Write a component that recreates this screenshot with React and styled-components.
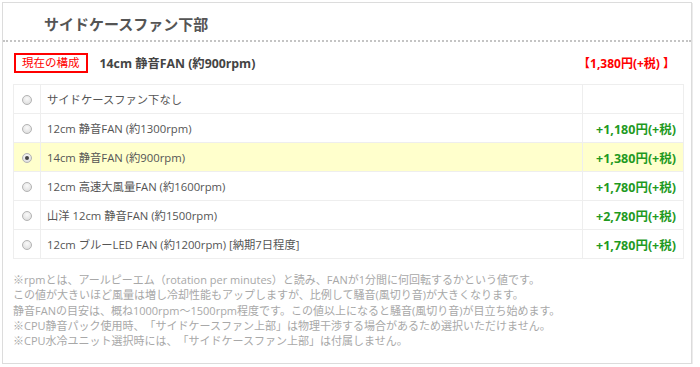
import React from "react";
import styled, { createGlobalStyle } from "styled-components";

const GlobalStyle = createGlobalStyle`
  html, body {
    margin: 0;
    padding: 0;
    background: #ffffff;
  }
  body {
    font-family: "Open Sans", "Noto Sans CJK JP", sans-serif;
    color: #555;
    text-spacing-trim: space-all;
  }
`;

const Panel = styled.section`
  box-sizing: border-box;
  width: 690px;
  height: 362px;
  margin: 2px 0 0 2px;
  border: 1px solid #dcdcdc;
  box-shadow: 1px 1px 0 #ececec;
  background: #fff;
`;

const Title = styled.h2`
  margin: 0;
  padding: 9px 0 0 41px;
  height: 28px;
  font-family: "Noto Sans CJK JP", sans-serif;
  font-size: 15px;
  font-weight: bold;
  color: #555;
  line-height: 24px;
  border-bottom: 2px dotted #c4c4c4;
`;

const Current = styled.div`
  display: flex;
  align-items: center;
  padding: 10px 16px 0 11px;
  height: 21px;
`;

const Badge = styled.span`
  box-sizing: border-box;
  height: 20px;
  padding: 0 6px;
  border: 2px solid #ff0000;
  color: #ff0000;
  font-size: 11.5px;
  line-height: 16px;
`;

const CurrentName = styled.span`
  margin-left: 12px;
  font-size: 12.3px;
  font-weight: bold;
  color: #444;
`;

const CurrentPrice = styled.span`
  margin-left: auto;
  font-size: 12px;
  font-weight: bold;
  color: #ff0000;
`;

const Table = styled.table`
  margin: 11px 0 0 10px;
  width: 671px;
  border-collapse: collapse;
  font-size: 11.3px;
`;

const Row = styled.tr`
  height: 29px;
  background: ${(p) => (p.$active ? "#ffffcc" : "#fff")};
  td {
    border: 1px solid #eeeeee;
  }
`;

const RadioCell = styled.td`
  width: 26px;
  text-align: center;
  padding: 0;
`;

const Radio = styled.span`
  display: inline-block;
  box-sizing: border-box;
  width: 10px;
  height: 10px;
  border-radius: 50%;
  border: 1px solid #b4b4b4;
  background: radial-gradient(circle at 50% 35%, #fafafa, #d8d8d8);
  vertical-align: middle;
  position: relative;
  &::after {
    content: "";
    display: ${(p) => (p.$checked ? "block" : "none")};
    position: absolute;
    left: 2px;
    top: 2px;
    width: 4px;
    height: 4px;
    border-radius: 50%;
    background: #444;
  }
`;

const NameCell = styled.td`
  padding: 0 0 0 6px;
  color: #555;
`;

const PriceCell = styled.td`
  width: 93px;
  padding: 0 7px 0 0;
  text-align: right;
  font-size: 12.5px;
  font-weight: bold;
  color: #1f9a1f;
`;

const Notes = styled.div`
  margin: 13px 0 0 10px;
  font-size: 11px;
  line-height: 15.3px;
  color: #a8a8a8;
`;

const options = [
  { name: "サイドケースファン下なし", price: "" },
  { name: "12cm 静音FAN (約1300rpm)", price: "+1,180円(+税)" },
  { name: "14cm 静音FAN (約900rpm)", price: "+1,380円(+税)", active: true },
  { name: "12cm 高速大風量FAN (約1600rpm)", price: "+1,780円(+税)" },
  { name: "山洋 12cm 静音FAN (約1500rpm)", price: "+2,780円(+税)" },
  { name: "12cm ブルーLED FAN (約1200rpm) [納期7日程度]", price: "+1,780円(+税)" },
];

const notes = [
  "※rpmとは、アールピーエム（rotation per minutes）と読み、FANが1分間に何回転するかという値です。",
  "この値が大きいほど風量は増し冷却性能もアップしますが、比例して騒音(風切り音)が大きくなります。",
  "静音FANの目安は、概ね1000rpm～1500rpm程度です。この値以上になると騒音(風切り音)が目立ち始めます。",
  "※CPU静音パック使用時、「サイドケースファン上部」は物理干渉する場合があるため選択いただけません。",
  "※CPU水冷ユニット選択時には、「サイドケースファン上部」は付属しません。",
];

export default function App() {
  return (
    <>
      <GlobalStyle />
      <Panel>
        <Title>サイドケースファン下部</Title>
        <Current>
          <Badge>現在の構成</Badge>
          <CurrentName>14cm 静音FAN (約900rpm)</CurrentName>
          <CurrentPrice>【1,380円(+税) 】</CurrentPrice>
        </Current>
        <Table>
          <tbody>
            {options.map((o) => (
              <Row key={o.name} $active={o.active}>
                <RadioCell>
                  <Radio $checked={o.active} />
                </RadioCell>
                <NameCell>{o.name}</NameCell>
                <PriceCell>{o.price}</PriceCell>
              </Row>
            ))}
          </tbody>
        </Table>
        <Notes>
          {notes.map((n) => (
            <div key={n}>{n}</div>
          ))}
        </Notes>
      </Panel>
    </>
  );
}
